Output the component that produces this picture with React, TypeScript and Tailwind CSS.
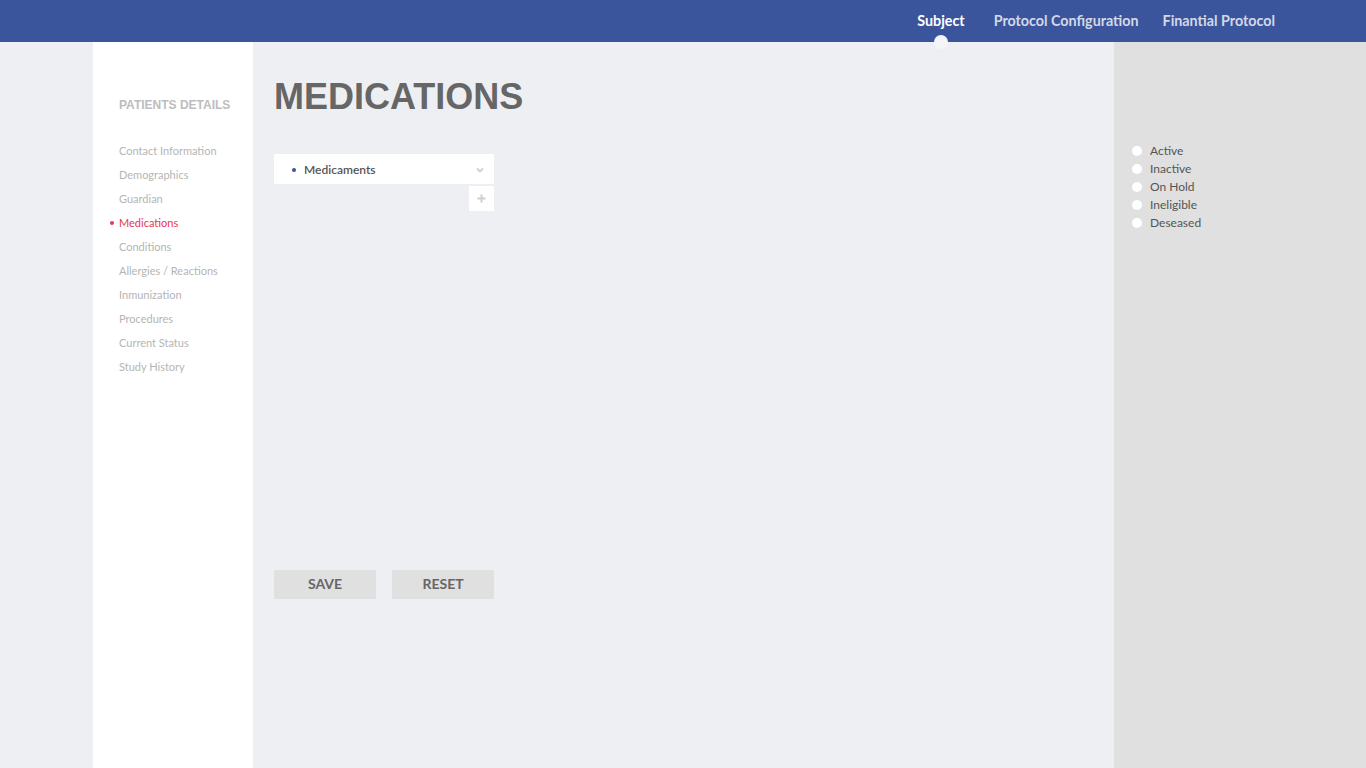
import React from "react";

const items = [
  "Contact Information",
  "Demographics",
  "Guardian",
  "Medications",
  "Conditions",
  "Allergies / Reactions",
  "Inmunization",
  "Procedures",
  "Current Status",
  "Study History",
];

const statuses = ["Active", "Inactive", "On Hold", "Ineligible", "Deseased"];

export default function App() {
  return (
    <div className="w-[1366px] h-[768px] overflow-hidden flex flex-col bg-[#eeeff3]" style={{ fontFamily: "Lato, 'Open Sans', sans-serif" }}>
      <header className="relative z-10 h-[42px] shrink-0 bg-[#3b559d] flex items-stretch justify-end pr-[91px]">
        <nav className="flex items-stretch text-[14.3px] font-bold">
          <div className="relative text-white flex items-center mr-[29px]">
            Subject
            <span className="absolute left-1/2 -translate-x-1/2 bottom-[-7px] w-[14px] h-[14px] rounded-full bg-[#f4f5f8]" />
          </div>
          <div className="text-[#d3d8e8] flex items-center mr-[24px]">Protocol Configuration</div>
          <div className="text-[#d3d8e8] flex items-center">Finantial Protocol</div>
        </nav>
      </header>
      <div className="flex flex-1 min-h-0">
        <div className="w-[93px] shrink-0" />
        <aside className="w-[160px] shrink-0 bg-white pt-[56px] pl-[26px]">
          <div className="text-[12px] font-bold text-[#bdbdbd] leading-[14px]" style={{ fontFamily: "'Liberation Sans', Arial, sans-serif" }}>
            PATIENTS DETAILS
          </div>
          <ul className="mt-[27px] flex flex-col">
            {items.map((it) => (
              <li
                key={it}
                className={`relative h-[24px] leading-[24px] text-[11px] ${it === "Medications" ? "text-[#e8384f]" : "text-[#b5b5b5]"}`}
              >
                {it === "Medications" && (
                  <span className="absolute left-[-9px] top-[10px] w-[4px] h-[4px] rounded-full bg-[#e8384f]" />
                )}
                {it}
              </li>
            ))}
          </ul>
        </aside>
        <main className="flex-1 pl-[21px] pt-[33px] flex flex-col">
          <h1 className="text-[36px] font-bold text-[#666666] leading-[44px]" style={{ fontFamily: "'Liberation Sans', Arial, sans-serif" }}>
            MEDICATIONS
          </h1>
          <div className="w-[220px] mt-[35px]">
            <div className="h-[30px] bg-white flex items-center pl-[18px] pr-[10px] pt-[1px]">
              <span className="w-[4px] h-[4px] rounded-full bg-[#3b559d] mr-[8px]" />
              <span className="text-[12px] font-semibold text-[#555555] flex-1">Medicaments</span>
              <svg width="8" height="6" viewBox="0 0 8 6">
                <path d="M1 1.5 L4 4.5 L7 1.5" stroke="#cfcfcf" strokeWidth="1.8" fill="none" />
              </svg>
            </div>
            <div className="flex justify-end mt-[2px]">
              <div className="w-[25px] h-[25px] bg-white flex items-center justify-center">
                <svg width="9" height="9" viewBox="0 0 9 9">
                  <path d="M4.5 0.5 V8.5 M0.5 4.5 H8.5" stroke="#cfcfcf" strokeWidth="2" />
                </svg>
              </div>
            </div>
          </div>
          <div className="flex gap-[16px] mt-[359px]">
            <button className="w-[102px] h-[29px] bg-[#e0e0e0] text-[#666666] text-[14px] font-bold pb-[2px]">SAVE</button>
            <button className="w-[102px] h-[29px] bg-[#e0e0e0] text-[#666666] text-[14px] font-bold pb-[2px]">RESET</button>
          </div>
        </main>
        <aside className="w-[252px] shrink-0 bg-[#e0e0e0] pt-[100px] pl-[18px]">
          <ul className="flex flex-col">
            {statuses.map((s) => (
              <li key={s} className="h-[18px] flex items-center text-[12px] text-[#555555]">
                <span className="w-[10px] h-[10px] rounded-full bg-white mr-[8px]" />
                {s}
              </li>
            ))}
          </ul>
        </aside>
      </div>
    </div>
  );
}
